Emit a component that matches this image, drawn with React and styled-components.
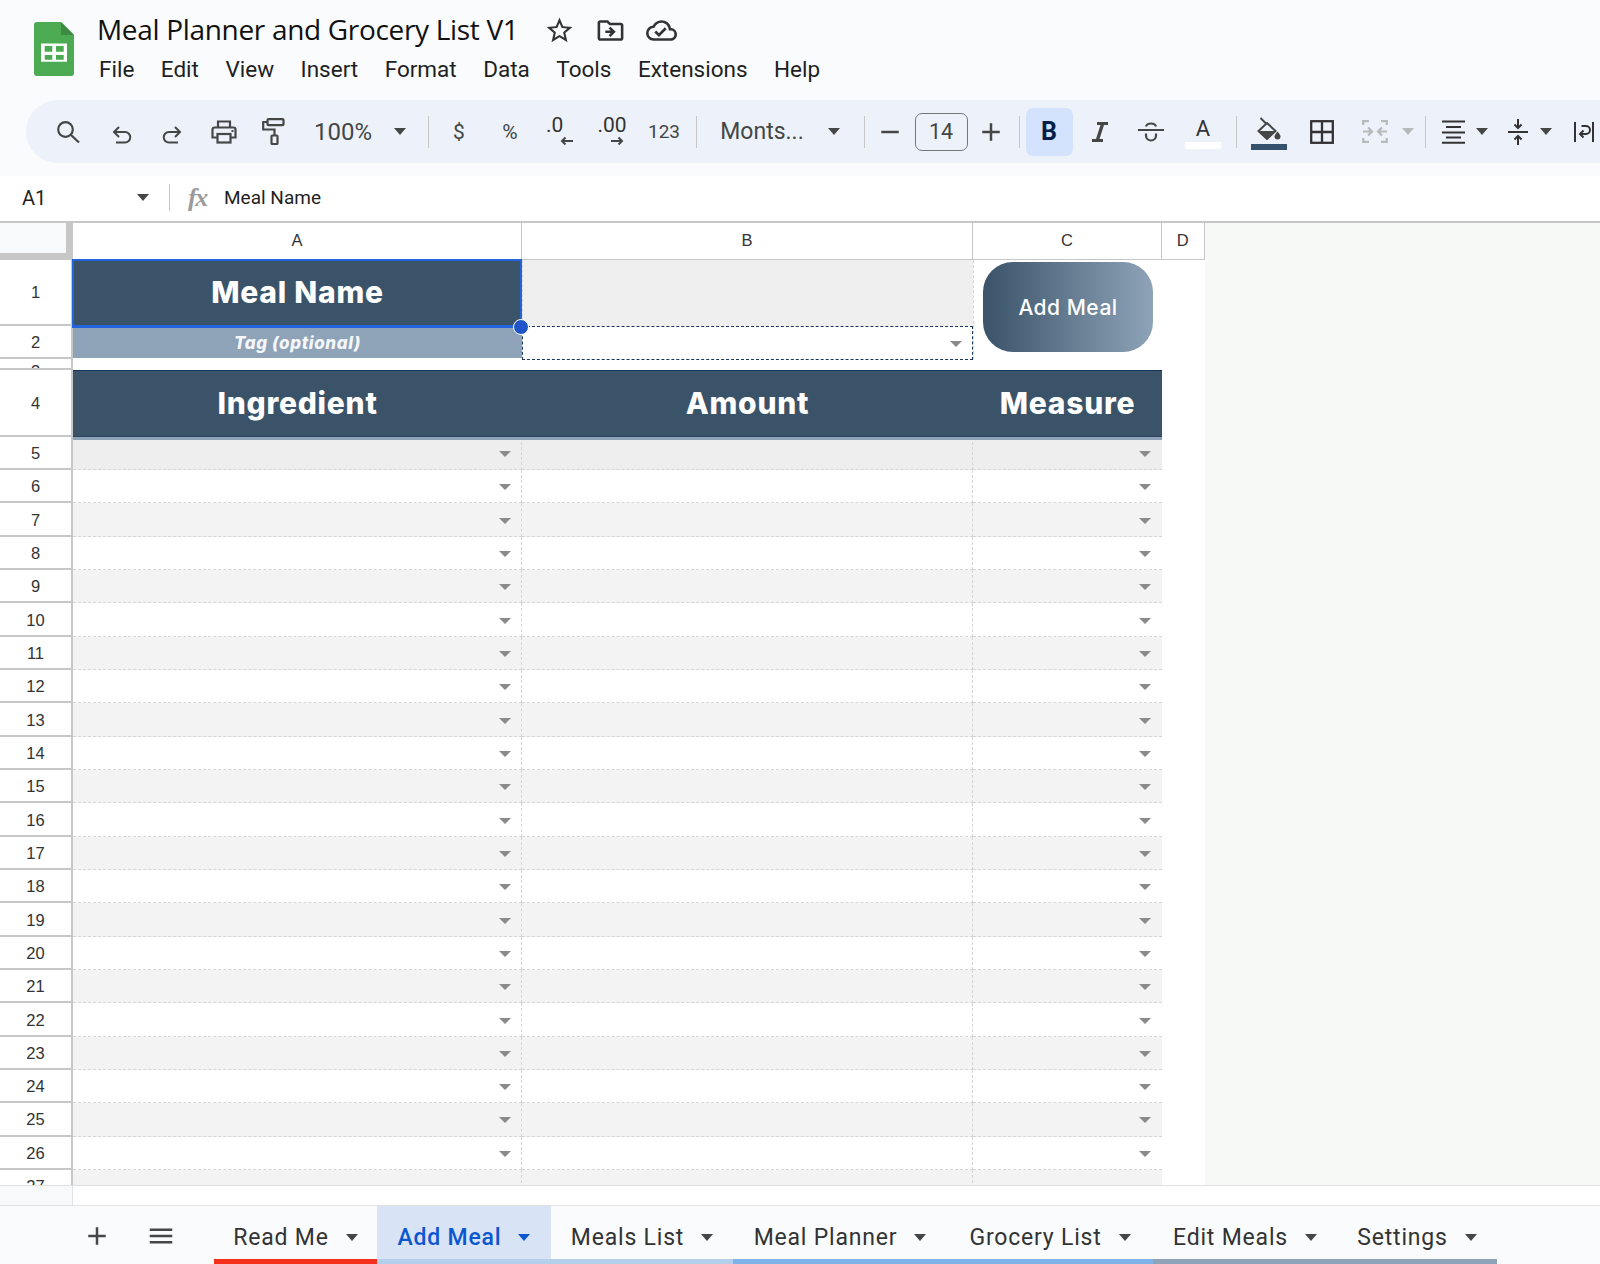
import React from 'react';
import styled, { createGlobalStyle } from 'styled-components';
import {
  MdStarBorder, MdOutlineDriveFileMove, MdOutlineCloudDone, MdRemove, MdAdd, MdMenu,
} from 'react-icons/md';

// -- CONSTANTS
const menus = ['File', 'Edit', 'View', 'Insert', 'Format', 'Data', 'Tools', 'Extensions', 'Help'];

const tabs = [
  { name: 'Read Me', width: 163, bar: '#f4301c' },
  { name: 'Add Meal', width: 174, bar: '#b4cfea', active: true },
  { name: 'Meals List', width: 182, bar: '#b4cfea' },
  { name: 'Meal Planner', width: 214, bar: '#7db3e8' },
  { name: 'Grocery List', width: 206, bar: '#7db3e8' },
  { name: 'Edit Meals', width: 184, bar: '#8ea3b8' },
  { name: 'Settings', width: 160, bar: '#8ea3b8' },
];

const ROW_LABEL_COUNT = 23;
const rows = Array.from({ length: ROW_LABEL_COUNT }, (_, i) => i + 5);

// -- GLOBAL
const PageStyle = createGlobalStyle`
  html, body {
    margin: 0;
    padding: 0;
    background: #fff;
  }
`;

const Page = styled.div`
  width: 1600px;
  height: 1264px;
  overflow: hidden;
  display: flex;
  flex-direction: column;
  font-family: Roboto, "Liberation Sans", sans-serif;
  color: #1f1f1f;
`;

// -- HEADER
const Header = styled.header`
  height: 176px;
  flex: none;
  background: #f9fbfd;
  display: flex;
  flex-direction: column;
`;

const TitleArea = styled.div`
  height: 100px;
  flex: none;
  display: flex;
  padding-left: 34px;
`;

const LogoWrap = styled.div`
  width: 40px;
  padding-top: 22px;
  margin-right: 23px;
`;

const TitleColumn = styled.div`
  display: flex;
  flex-direction: column;
`;

const TitleRow = styled.div`
  height: 55px;
  display: flex;
  align-items: center;
  padding-top: 3px;
  box-sizing: border-box;
`;

const DocTitle = styled.div`
  font-family: "Open Sans", Roboto, sans-serif;
  font-size: 28px;
  letter-spacing: -0.32px;
  color: #111;
  margin-right: 16px;
`;

const TitleIcon = styled.span`
  width: 51px;
  display: flex;
  justify-content: center;
  font-size: 31px;
  color: #333;
  margin-top: 3px;
`;

const MenuRow = styled.nav`
  display: flex;
  gap: 26.5px;
  padding-left: 2px;
  font-size: 22.5px;
  color: #1f1f1f;
  line-height: 28px;
`;

const Toolbar = styled.div`
  height: 63px;
  margin-left: 26px;
  background: #edf2fa;
  border-radius: 32px 0 0 32px;
  display: flex;
  align-items: center;
  overflow: hidden;
  color: #444746;
`;

const ToolSlot = styled.div`
  width: ${(p) => p.$w}px;
  margin-left: ${(p) => p.$gap}px;
  flex: none;
  display: flex;
  align-items: center;
  justify-content: center;
  font-size: 30px;
  color: #444746;
  white-space: nowrap;

  > * {
    flex: none;
  }
`;

const Sep = styled.div`
  width: 1px;
  height: 32px;
  background: #c7c7c7;
`;

const Caret = styled.div`
  width: 0;
  height: 0;
  border-left: 6.5px solid transparent;
  border-right: 6.5px solid transparent;
  border-top: 7px solid ${(p) => p.$color || '#444746'};
`;

const ToolText = styled.span`
  font-size: ${(p) => p.$size}px;
`;

const SizeBox = styled.div`
  width: 53px;
  height: 38px;
  box-sizing: border-box;
  border: 1.5px solid #747775;
  border-radius: 7px;
  display: flex;
  align-items: center;
  justify-content: center;
  font-size: 21.5px;
`;

const BoldButton = styled.div`
  width: 47px;
  height: 48px;
  border-radius: 7px;
  background: #d3e3fd;
  display: flex;
  align-items: center;
  justify-content: center;
  font-size: 25px;
  font-weight: 700;
  color: #041e49;
`;

const ColorIcon = styled.div`
  display: flex;
  flex-direction: column;
  align-items: center;
  width: 36px;
  margin-top: ${(p) => p.$top || 0}px;
`;

const ColorBar = styled.div`
  width: 100%;
  height: ${(p) => p.$h}px;
  margin-top: ${(p) => p.$gap || 0}px;
  background: ${(p) => p.$color};
`;

const LetterA = styled.span`
  font-size: 22px;
  line-height: 23px;
  height: 23px;
  color: #333;
`;

const DecimalIcon = styled.div`
  display: flex;
  flex-direction: column;
  align-items: flex-start;
  font-size: 21px;
  font-weight: 400;
  line-height: 19px;
  color: #333;
  padding-bottom: 2px;
`;

const ArrowLine = styled.svg`
  display: block;
  width: 14px;
  height: 10px;
  margin-left: ${(p) => p.$shift}px;
  margin-top: 1px;
`;

const ToolGlyph = styled.svg`
  display: block;
  fill: none;
  stroke: ${(p) => p.$stroke || '#444746'};
  stroke-width: ${(p) => p.$sw || 2}px;
  margin-top: ${(p) => p.$drop || 0}px;
`;

// -- FORMULA BAR
const FormulaBar = styled.div`
  height: 45px;
  flex: none;
  background: #fff;
  display: flex;
  align-items: center;
  padding-bottom: 2px;
  box-sizing: border-box;
`;

const NameBox = styled.div`
  width: 169px;
  box-sizing: border-box;
  padding: 0 20px 0 22px;
  display: flex;
  align-items: center;
  justify-content: space-between;
  font-size: 20px;
`;

const BarDivider = styled.div`
  width: 1px;
  height: 27px;
  background: #c7c7c7;
`;

const FxMark = styled.span`
  margin: 0 13px 0 18px;
  width: 23px;
  font-family: "Liberation Serif", serif;
  font-style: italic;
  font-size: 26px;
  font-weight: 700;
  letter-spacing: -1.5px;
  color: #9a9a9a;
`;

const FormulaText = styled.span`
  font-size: 19px;
`;

// -- SHEET
const SheetWrap = styled.div`
  position: relative;
  flex: none;
  height: 964px;
  box-sizing: border-box;
  border-top: 2px solid #c7c7c7;
  background: #f7f9f6;
  overflow: hidden;
`;

const Grid = styled.div`
  display: grid;
  grid-template-columns: 73px 449px 451px 189px 42.5px;
  grid-template-rows: 36.5px 66.7px 32.6px 11.3px 66.7px repeat(${ROW_LABEL_COUNT}, 33.33px);
  width: max-content;
  background: #fff;
  font-family: "Liberation Sans", Arial, sans-serif;
`;

const Corner = styled.div`
  background: #f8f9fa;
  box-sizing: border-box;
  border-right: 7px solid #c7c7c7;
  border-bottom: 7px solid #c7c7c7;
`;

const ColHead = styled.div`
  display: flex;
  align-items: center;
  justify-content: center;
  box-sizing: border-box;
  border-right: 1.5px solid #c7c7c7;
  border-bottom: 1.5px solid #c7c7c7;
  font-size: 16.5px;
  color: #333;
`;

const RowHead = styled.div`
  display: flex;
  align-items: ${(p) => (p.$clip ? 'flex-start' : 'center')};
  justify-content: center;
  box-sizing: border-box;
  border-right: 2px solid #c7c7c7;
  border-bottom: 2px solid #c7c7c7;
  padding-top: ${(p) => (p.$clip ? 3 : 2)}px;
  font-size: 16.5px;
  color: #333;
  overflow: hidden;
  background: #fff;
`;

const TitleCell = styled.div`
  background: #3a5369;
  color: #fff;
  display: flex;
  align-items: center;
  justify-content: center;
  font-family: Inter, sans-serif;
  font-weight: 800;
  font-size: 30px;
  letter-spacing: 0.75px;
  box-sizing: border-box;
  border-bottom: 1.5px solid #fff;
`;

const EmptyGrey = styled.div`
  background: #efefef;
  border-left: 1px dashed #d5d5d5;
`;

const MergedC = styled.div`
  grid-row: span 2;
  background: #fff;
  border-left: 1px dashed #d5d5d5;
`;

const TagCell = styled.div`
  background: #8ea3b8;
  color: #f4f6f8;
  display: flex;
  align-items: center;
  justify-content: center;
  font-family: Inter, sans-serif;
  font-weight: 800;
  font-style: italic;
  font-size: 17px;
  letter-spacing: 0.6px;
  height: 31px;
  margin-top: 1px;
`;

const DropCell = styled.div`
  background: ${(p) => (p.$alt ? (p.$first ? '#eeeeee' : '#f3f3f3') : '#fff')};
  box-sizing: border-box;
  display: flex;
  align-items: center;
  justify-content: flex-end;
  padding-top: 2px;
  padding-right: ${(p) => (p.$col === 'c' ? 11 : 10)}px;
  border-bottom: 1px dashed #d5d5d5;
  border-right: ${(p) => (p.$col === 'c' ? 'none' : '1px dashed #d5d5d5')};
`;

const PlainCell = styled.div`
  background: #fff;
`;

const HeadBand = styled.div`
  background: #3a5369;
  border-top: 1.5px solid #17375e;
  border-bottom: 1px solid #2b4560;
  box-sizing: border-box;
  box-shadow: 0 3px 0 #8ea3b8;
  z-index: 1;
  color: #fff;
  display: flex;
  align-items: center;
  justify-content: center;
  font-family: Inter, sans-serif;
  font-weight: 800;
  font-size: 30px;
  letter-spacing: 0.75px;
`;

const DropArrow = styled.div`
  width: 0;
  height: 0;
  border-left: 6.5px solid transparent;
  border-right: 6.5px solid transparent;
  border-top: 6.5px solid #8a8a8a;
`;

const Selection = styled.div`
  position: absolute;
  left: 72px;
  top: 35.5px;
  width: 450px;
  height: 69px;
  box-sizing: border-box;
  border: 2px solid #2264dc;
  border-bottom-width: 3px;
  pointer-events: none;
  z-index: 2;
`;

const Handle = styled.div`
  position: absolute;
  right: -9px;
  bottom: -10px;
  width: 14px;
  height: 14px;
  border-radius: 50%;
  background: #1f55c9;
  border: 1.5px solid #fff;
`;

const RangeBox = styled.div`
  position: absolute;
  left: 522px;
  top: 103px;
  width: 451px;
  height: 34px;
  box-sizing: border-box;
  border: 1.5px dashed #17375e;
  display: flex;
  align-items: center;
  justify-content: flex-end;
  padding-right: 10px;
  padding-top: 1px;
  z-index: 1;
`;

const AddButton = styled.div`
  position: absolute;
  left: 983px;
  top: 39px;
  width: 170px;
  height: 90px;
  border-radius: 30px;
  background: linear-gradient(90deg, #3a5369, #8ea3b8);
  color: #fff;
  display: flex;
  align-items: center;
  justify-content: center;
  font-family: Inter, sans-serif;
  font-weight: 500;
  font-size: 21px;
  letter-spacing: 0.5px;
  z-index: 1;
`;

// -- BOTTOM
const ScrollStrip = styled.div`
  height: 21px;
  flex: none;
  box-sizing: border-box;
  border-top: 1.5px solid #e0e0e0;
  border-bottom: 1.5px solid #e3e3e3;
  background: #fff;
`;

const RowStub = styled.div`
  width: 73px;
  height: 100%;
  background: #f8f9fa;
  box-sizing: border-box;
  border-right: 1.5px solid #e3e3e3;
`;

const TabBar = styled.div`
  flex: 1;
  background: #f9fbfd;
  display: flex;
  padding-left: 214px;
  position: relative;
`;

const TabAction = styled.div`
  position: absolute;
  top: 15px;
  left: ${(p) => p.$x}px;
  font-size: 30px;
  color: #444746;
  display: flex;
`;

const Tab = styled.div`
  width: ${(p) => p.$w}px;
  flex: none;
  box-sizing: border-box;
  display: flex;
  align-items: center;
  justify-content: center;
  gap: 17px;
  padding-top: 9px;
  border-bottom: 5px solid ${(p) => p.$bar};
  background: ${(p) => (p.$active ? '#d8e4f5' : 'transparent')};
  color: ${(p) => (p.$active ? '#0b57d0' : '#333')};
  font-weight: ${(p) => (p.$active ? 500 : 400)};
  font-size: 23px;
  letter-spacing: 0.8px;
`;

// -- ICONS
const SheetsLogo = () => (
  <svg width="40" height="54" viewBox="0 0 40 54">
    <path d="M3 0h24l13 13v38a3 3 0 0 1-3 3H3a3 3 0 0 1-3-3V3a3 3 0 0 1 3-3z" fill="#4cab52" />
    <path d="M27 0l13 13H27z" fill="#3c8a41" />
    <path
      d="M7 21.500h26v18.200H7zM10.700 24v5.700h7.600V24zM22 24v5.700h7.700V24zM10.700 33v4.800h7.600V33zM22 33v4.800h7.700V33z"
      fill="#fff"
      fillRule="evenodd"
    />
  </svg>
);

const SearchIcon = () => (
  <ToolGlyph width="23" height="22" viewBox="0 0 23 22" $sw={2.2}>
    <circle cx="8.500" cy="8.500" r="7.300" />
    <path d="M14 14l8 7.500" />
  </ToolGlyph>
);

const UndoIcon = () => (
  <ToolGlyph width="20" height="18" viewBox="0 0 20 18" $drop={7}>
    <path d="M7 1L2 6l5 5M2 6h11a5 5 0 0 1 0 10.500H4" />
  </ToolGlyph>
);

const RedoIcon = () => (
  <ToolGlyph width="20" height="18" viewBox="0 0 20 18" $drop={7}>
    <path d="M13 1l5 5-5 5M18 6H7a5 5 0 0 0 0 10.500h9" />
  </ToolGlyph>
);

const PrintIcon = () => (
  <ToolGlyph width="26" height="24" viewBox="0 0 26 24" $sw={2.2}>
    <path d="M7 7V1.500h12V7M6 17.500H1.500V9.500a2 2 0 0 1 2-2h19a2 2 0 0 1 2 2v8H20" />
    <rect x="6.500" y="14" width="13" height="8.500" />
    <path d="M20.500 11h2" />
  </ToolGlyph>
);

const PaintIcon = () => (
  <ToolGlyph width="23" height="27" viewBox="0 0 23 27" $sw={2.2}>
    <rect x="5.500" y="1.200" width="16" height="6" rx="1" />
    <path d="M5.500 4H1.200v7.500H12.500V17" />
    <rect x="9.500" y="17.500" width="6" height="8.500" rx="0.800" />
  </ToolGlyph>
);

const ItalicIcon = () => (
  <svg width="16" height="20" viewBox="0 0 16 20">
    <path d="M5 0h11v3h-4L7.500 17H11v3H0v-3h4L8.500 3H5z" fill="#444746" />
  </svg>
);

const StrikeIcon = () => (
  <ToolGlyph width="26" height="20" viewBox="0 0 26 20" $sw={2.2}>
    <path d="M0 8h26M8 4.500C9 .5 17 .5 18 4.500M8 11.500v2a5 5 0 0 0 10 0v-2" />
  </ToolGlyph>
);

const FillIcon = () => (
  <svg width="24" height="23" viewBox="0 0 24 23">
    <path d="M10 6L18.500 14 10 22 1.500 14z" fill="none" stroke="#444746" strokeWidth="2" />
    <path d="M1.500 14h17L10 22z" fill="#444746" />
    <path d="M3.500 1L9.500 7" fill="none" stroke="#444746" strokeWidth="2" />
    <path d="M20.500 14.500s-3 3.300-3 5a3 3 0 0 0 6 0c0-1.700-3-5-3-5z" fill="#444746" />
  </svg>
);

const BordersIcon = () => (
  <ToolGlyph width="24" height="24" viewBox="0 0 24 24" $stroke="#333" $sw={2.3}>
    <rect x="1.200" y="1.200" width="21.600" height="21.600" />
    <path d="M12 1v22M1 12h22" />
  </ToolGlyph>
);

const MergeIcon = () => (
  <ToolGlyph width="26" height="23" viewBox="0 0 26 23" $stroke="#b7b9bb" $sw={2.2}>
    <path d="M7 1.200H1.200V5M1.200 18v3.800H7M19 1.200h5.800V5M24.800 18v3.800H19M1 11.500h9M6 7.500l4 4-4 4M25 11.500h-9M20 7.500l-4 4 4 4" />
  </ToolGlyph>
);

const AlignIcon = () => (
  <ToolGlyph width="23" height="24" viewBox="0 0 23 24" $stroke="#333" $sw={2}>
    <path d="M0 1.500h23M4 7h15M0 12.500h23M4 17.500h15M0 22.800h23" />
  </ToolGlyph>
);

const ValignIcon = () => (
  <ToolGlyph width="20" height="26" viewBox="0 0 20 26" $stroke="#333" $sw={2}>
    <path d="M0 13h20M10 0v9M6.500 5.500L10 9l3.500-3.500M10 26v-9M6.500 20.500L10 17l3.500 3.500" />
  </ToolGlyph>
);

const WrapIcon = () => (
  <ToolGlyph width="20" height="20" viewBox="0 0 20 20" $stroke="#333" $sw={2}>
    <path d="M1 0v20M19 0v20M7.500 4H12a3.500 3.500 0 0 1 0 8H6.500M9.500 8.500L6 12l3.500 3.500" />
  </ToolGlyph>
);

const Decimal = ({ text, left }) => (
  <DecimalIcon>
    <span>{text}</span>
    <ArrowLine viewBox="0 0 14 10" $shift={left ? 14 : 13} fill="none" stroke="#444746" strokeWidth="2">
      {left ? <path d="M13 5H2m3.500-3.500L2 5l3.500 3.500" /> : <path d="M1 5h11M8.500 1.500L12 5 8.500 8.500" />}
    </ArrowLine>
  </DecimalIcon>
);

// -- TOOLBAR DATA: c is the centre of each control along the page
const toolItems = [
  { c: 68, node: <SearchIcon /> },
  { c: 122, node: <UndoIcon /> },
  { c: 172, node: <RedoIcon /> },
  { c: 224, node: <PrintIcon /> },
  { c: 273, node: <PaintIcon /> },
  { c: 343, node: <ToolText $size={24}>100%</ToolText> },
  { c: 400, node: <Caret /> },
  { c: 428, node: <Sep /> },
  { c: 459, node: <ToolText $size={21}>$</ToolText> },
  { c: 510, node: <ToolText $size={21}>%</ToolText> },
  { c: 560, node: <Decimal text=".0" left /> },
  { c: 612, node: <Decimal text=".00" /> },
  { c: 664, node: <ToolText $size={19}>123</ToolText> },
  { c: 696, node: <Sep /> },
  { c: 762, node: <ToolText $size={23}>Monts...</ToolText> },
  { c: 834, node: <Caret /> },
  { c: 864, node: <Sep /> },
  { c: 890, node: <MdRemove /> },
  { c: 941, node: <SizeBox>14</SizeBox> },
  { c: 991, node: <MdAdd /> },
  { c: 1019, node: <Sep /> },
  { c: 1049, node: <BoldButton>B</BoldButton> },
  { c: 1100, node: <ItalicIcon /> },
  { c: 1151, node: <StrikeIcon /> },
  {
    c: 1203,
    node: (
      <ColorIcon $top={2}>
        <LetterA>A</LetterA>
        <ColorBar $h={7} $gap={2} $color="#fff" />
      </ColorIcon>
    ),
  },
  { c: 1236, node: <Sep /> },
  {
    c: 1269,
    node: (
      <ColorIcon $top={3}>
        <FillIcon />
        <ColorBar $h={6} $gap={4} $color="#36516b" />
      </ColorIcon>
    ),
  },
  { c: 1322, node: <BordersIcon /> },
  { c: 1375, node: <MergeIcon /> },
  { c: 1408, node: <Caret $color="#b7b9bb" /> },
  { c: 1425, node: <Sep /> },
  { c: 1453, node: <AlignIcon /> },
  { c: 1482, node: <Caret /> },
  { c: 1518, node: <ValignIcon /> },
  { c: 1546, node: <Caret /> },
  { c: 1584, node: <WrapIcon /> },
];

// each slot is as wide as the room to its nearest neighbour, the rest goes to margin
const slotLayout = () => {
  let end = 26;
  return toolItems.map((item, i) => {
    const prev = i === 0 ? 26 : toolItems[i - 1].c;
    const next = i === toolItems.length - 1 ? item.c + 40 : toolItems[i + 1].c;
    const half = Math.min(item.c - prev, next - item.c) / 2;
    const gap = item.c - half - end;
    end = item.c + half;
    return { ...item, w: half * 2, gap };
  });
};

// -- MAIN
export default function App() {
  return (
    <Page>
      <PageStyle />
      <Header>
        <TitleArea>
          <LogoWrap><SheetsLogo /></LogoWrap>
          <TitleColumn>
            <TitleRow>
              <DocTitle>Meal Planner and Grocery List V1</DocTitle>
              <TitleIcon><MdStarBorder /></TitleIcon>
              <TitleIcon><MdOutlineDriveFileMove /></TitleIcon>
              <TitleIcon><MdOutlineCloudDone /></TitleIcon>
            </TitleRow>
            <MenuRow>
              {menus.map((m) => <span key={m}>{m}</span>)}
            </MenuRow>
          </TitleColumn>
        </TitleArea>
        <Toolbar>
          {slotLayout().map((item) => (
            <ToolSlot key={item.c} $w={item.w} $gap={item.gap}>{item.node}</ToolSlot>
          ))}
        </Toolbar>
      </Header>

      <FormulaBar>
        <NameBox>
          A1
          <Caret />
        </NameBox>
        <BarDivider />
        <FxMark>fx</FxMark>
        <FormulaText>Meal Name</FormulaText>
      </FormulaBar>

      <SheetWrap>
        <Grid>
          <Corner />
          <ColHead>A</ColHead>
          <ColHead>B</ColHead>
          <ColHead>C</ColHead>
          <ColHead>D</ColHead>

          <RowHead>1</RowHead>
          <TitleCell>Meal Name</TitleCell>
          <EmptyGrey />
          <MergedC />
          <PlainCell />

          <RowHead>2</RowHead>
          <TagCell>Tag (optional)</TagCell>
          <PlainCell />
          <PlainCell />

          <RowHead $clip>3</RowHead>
          <PlainCell />
          <PlainCell />
          <PlainCell />
          <PlainCell />

          <RowHead>4</RowHead>
          <HeadBand>Ingredient</HeadBand>
          <HeadBand>Amount</HeadBand>
          <HeadBand>Measure</HeadBand>
          <PlainCell />

          {rows.map((n) => (
            <React.Fragment key={n}>
              <RowHead>{n}</RowHead>
              <DropCell $col="a" $alt={n % 2 === 1} $first={n === 5}>
                {n < 27 && <DropArrow />}
              </DropCell>
              <DropCell $col="b" $alt={n % 2 === 1} $first={n === 5} />
              <DropCell $col="c" $alt={n % 2 === 1} $first={n === 5}>
                {n < 27 && <DropArrow />}
              </DropCell>
              <PlainCell />
            </React.Fragment>
          ))}
        </Grid>
        <Selection><Handle /></Selection>
        <RangeBox><DropArrow /></RangeBox>
        <AddButton>Add Meal</AddButton>
      </SheetWrap>

      <ScrollStrip><RowStub /></ScrollStrip>

      <TabBar>
        <TabAction $x={82}><MdAdd /></TabAction>
        <TabAction $x={146}><MdMenu /></TabAction>
        {tabs.map((t) => (
          <Tab key={t.name} $w={t.width} $bar={t.bar} $active={t.active}>
            {t.name}
            <Caret $color={t.active ? '#0b57d0' : '#444746'} />
          </Tab>
        ))}
      </TabBar>
    </Page>
  );
}
